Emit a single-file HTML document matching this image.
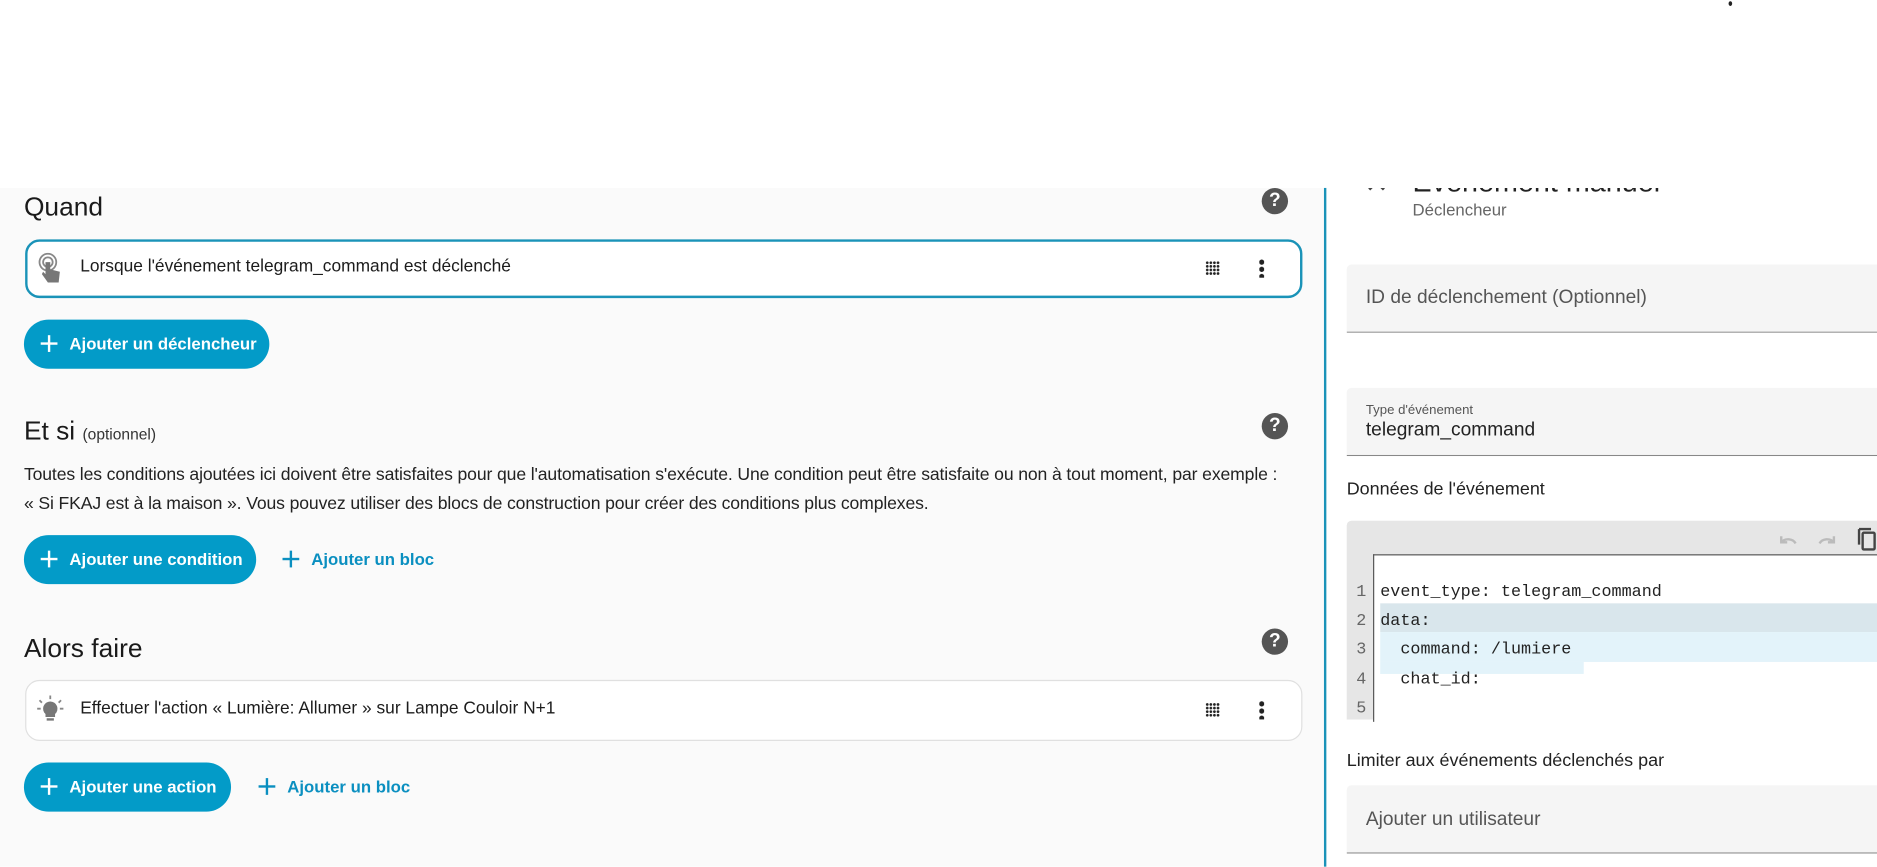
<!DOCTYPE html>
<html><head><meta charset="utf-8"><style>
*{box-sizing:border-box;margin:0;padding:0}
html,body{width:1877px;height:866px;overflow:hidden;background:#fff}
#w{position:absolute;left:0;top:0;width:1568px;height:724px;transform:scale(1.19707);transform-origin:0 0;font-family:"Liberation Sans",sans-serif;color:#1c1c1c}
.a{position:absolute;white-space:nowrap}
.h{font-size:22px;color:#1a1a1a}
.q{position:absolute;width:22px;height:22px;border-radius:50%;background:#555;color:#fff;font-weight:bold;font-size:16px;text-align:center;line-height:22px}
.card{position:absolute;left:21px;width:1067px;background:#fff;border-radius:12px}
.btn{position:absolute;left:20px;height:41px;border-radius:21px;background:#039bc8;color:#fff;font-size:14px;font-weight:bold;line-height:41px;padding-left:38px}
.btn:before,.lnk:before{content:"";position:absolute;left:14px;top:13px;width:14px;height:14px;background:linear-gradient(currentColor,currentColor) center/14px 2px no-repeat,linear-gradient(currentColor,currentColor) center/2px 14px no-repeat}
.lnk{position:absolute;height:41px;line-height:41px;color:#0a8fc0;font-size:14px;font-weight:bold;padding-left:38px}
.grid{position:absolute;width:12px;height:12px;background:radial-gradient(circle,#222 1px,transparent 1.3px) 0 0/3px 3px}
.dots{position:absolute;width:4px;height:16px;background:radial-gradient(circle,#222 2px,transparent 2.3px) 0 0/4px 6px}
.fld{position:absolute;left:1125px;width:443px;height:57px;background:#f5f5f5;border-bottom:1px solid #888;border-radius:4px 0 0 0}
.code{position:absolute;font-family:"Liberation Mono",monospace;font-size:14px;color:#222}
</style></head><body><div id="w">
<div class="a" style="left:1180px;top:139px;font-size:24px;color:#222;clip-path:inset(18px 0 0 0)">Événement manuel</div>
<div class="a" style="left:1140px;top:139px;font-size:24px;color:#444;clip-path:inset(18px 0 0 0)">✕</div>
<div class="a" style="left:0;top:0;width:1568px;height:157px;background:#fff"></div>
<div class="a" style="left:1444px;top:1px;width:3px;height:4px;background:#222;border-radius:50%"></div>
<div class="a" style="left:0;top:157px;width:1106px;height:567px;background:#fafafa"></div>
<div class="a" style="left:1106px;top:157px;width:2px;height:567px;background:#1a93b8"></div>

<div class="a h" style="left:20px;top:160px">Quand</div>
<div class="q" style="left:1054px;top:157px">?</div>
<div class="card" style="top:200px;height:49px;border:2px solid #1a93b8"></div>
<svg class="a" style="left:31px;top:211px" width="22" height="26" viewBox="0 0 22 26"><circle cx="9" cy="8" r="7" fill="none" stroke="#888" stroke-width="1.5"/><circle cx="9" cy="8" r="4" fill="none" stroke="#888" stroke-width="1.5"/><path d="M7 8v10l-2-2-1 2 5 7h9l1-9-8-2V8z" fill="#777"/></svg>
<div class="a" style="left:67px;top:215px;font-size:14.5px;font-weight:500">Lorsque l'événement telegram_command est déclenché</div>
<div class="grid" style="left:1007px;top:218px"></div>
<div class="dots" style="left:1052px;top:216px"></div>
<div class="btn" style="top:267px;width:205px">Ajouter un déclencheur</div>

<div class="a h" style="left:20px;top:347px">Et si <span style="font-size:13px;color:#333">(optionnel)</span></div>
<div class="q" style="left:1054px;top:345px">?</div>
<div class="a" style="left:20px;top:385px;font-size:14.7px;letter-spacing:-0.1px;line-height:24px;color:#222">Toutes les conditions ajoutées ici doivent être satisfaites pour que l'automatisation s'exécute. Une condition peut être satisfaite ou non à tout moment, par exemple :<br>« Si FKAJ est à la maison ». Vous pouvez utiliser des blocs de construction pour créer des conditions plus complexes.</div>
<div class="btn" style="top:447px;width:194px">Ajouter une condition</div>
<div class="lnk" style="left:222px;top:447px">Ajouter un bloc</div>

<div class="a h" style="left:20px;top:529px">Alors faire</div>
<div class="q" style="left:1054px;top:525px">?</div>
<div class="card" style="top:568px;height:51px;border:1px solid #e0e0e0"></div>
<svg class="a" style="left:31px;top:581px" width="22" height="24" viewBox="0 0 22 24"><path d="M11 5a6 6 0 0 0-4 10.5V18h8v-2.5A6 6 0 0 0 11 5zM8 19h6v2H8z" fill="#777"/><path d="M11 0v3M2 4l2 2M20 4l-2 2M0 11h3M19 11h3" stroke="#888" stroke-width="1.5"/></svg>
<div class="a" style="left:67px;top:584px;font-size:14.5px;font-weight:500">Effectuer l'action « Lumière: Allumer » sur Lampe Couloir N+1</div>
<div class="grid" style="left:1007px;top:587px"></div>
<div class="dots" style="left:1052px;top:585px"></div>
<div class="btn" style="top:637px;width:173px">Ajouter une action</div>
<div class="lnk" style="left:202px;top:637px">Ajouter un bloc</div>

<div class="a" style="left:1180px;top:167px;font-size:14px;color:#666">Déclencheur</div>
<div class="fld" style="top:221px"></div>
<div class="a" style="left:1141px;top:240px;font-size:16px;color:#555">ID de déclenchement (Optionnel)</div>
<div class="fld" style="top:324px"></div>
<div class="a" style="left:1141px;top:337px;font-size:11px;color:#555">Type d'événement</div>
<div class="a" style="left:1141px;top:351px;font-size:16px;color:#222">telegram_command</div>
<div class="a" style="left:1125px;top:400px;font-size:15px;color:#222">Données de l'événement</div>

<div class="a" style="left:1125px;top:435px;width:443px;height:166px;background:#e6e6e6;border-radius:4px 0 0 0"></div>
<div class="a" style="left:1147px;top:463px;width:421px;height:140px;background:#fff;border-left:1px solid #555;border-top:1px solid #555"></div>
<div class="a" style="left:1153px;top:504px;width:415px;height:24px;background:#d9e6ec"></div>
<div class="a" style="left:1153px;top:528px;width:415px;height:25px;background:#e3f3fa"></div>
<div class="a" style="left:1153px;top:553px;width:170px;height:10px;background:#e3f3fa"></div>
<div class="code" style="left:1133px;top:483px;line-height:24.2px;color:#666">1<br>2<br>3<br>4<br>5</div>
<div class="code" style="left:1153px;top:483px;line-height:24.2px;white-space:pre">event_type: telegram_command
data:
  command: /lumiere
  chat_id:</div>
<svg class="a" style="left:1484px;top:443px" width="60" height="16" viewBox="0 0 60 16"><path d="M4 5v5h5M4 10a7 6 0 0 1 12 1" fill="none" stroke="#bbb" stroke-width="2"/><path d="M48 5v5h-5M48 10a7 6 0 0 0-12 1" fill="none" stroke="#bbb" stroke-width="2"/></svg>
<svg class="a" style="left:1550px;top:439px" width="20" height="22" viewBox="0 0 20 22"><path d="M3 3h10M3 3v13" stroke="#444" stroke-width="2" fill="none"/><rect x="6" y="6" width="10" height="14" rx="1" fill="none" stroke="#444" stroke-width="2"/></svg>

<div class="a" style="left:1125px;top:627px;font-size:15px;color:#222">Limiter aux événements déclenchés par</div>
<div class="fld" style="top:656px"></div>
<div class="a" style="left:1141px;top:676px;font-size:16px;color:#555">Ajouter un utilisateur</div>
</div></body></html>
